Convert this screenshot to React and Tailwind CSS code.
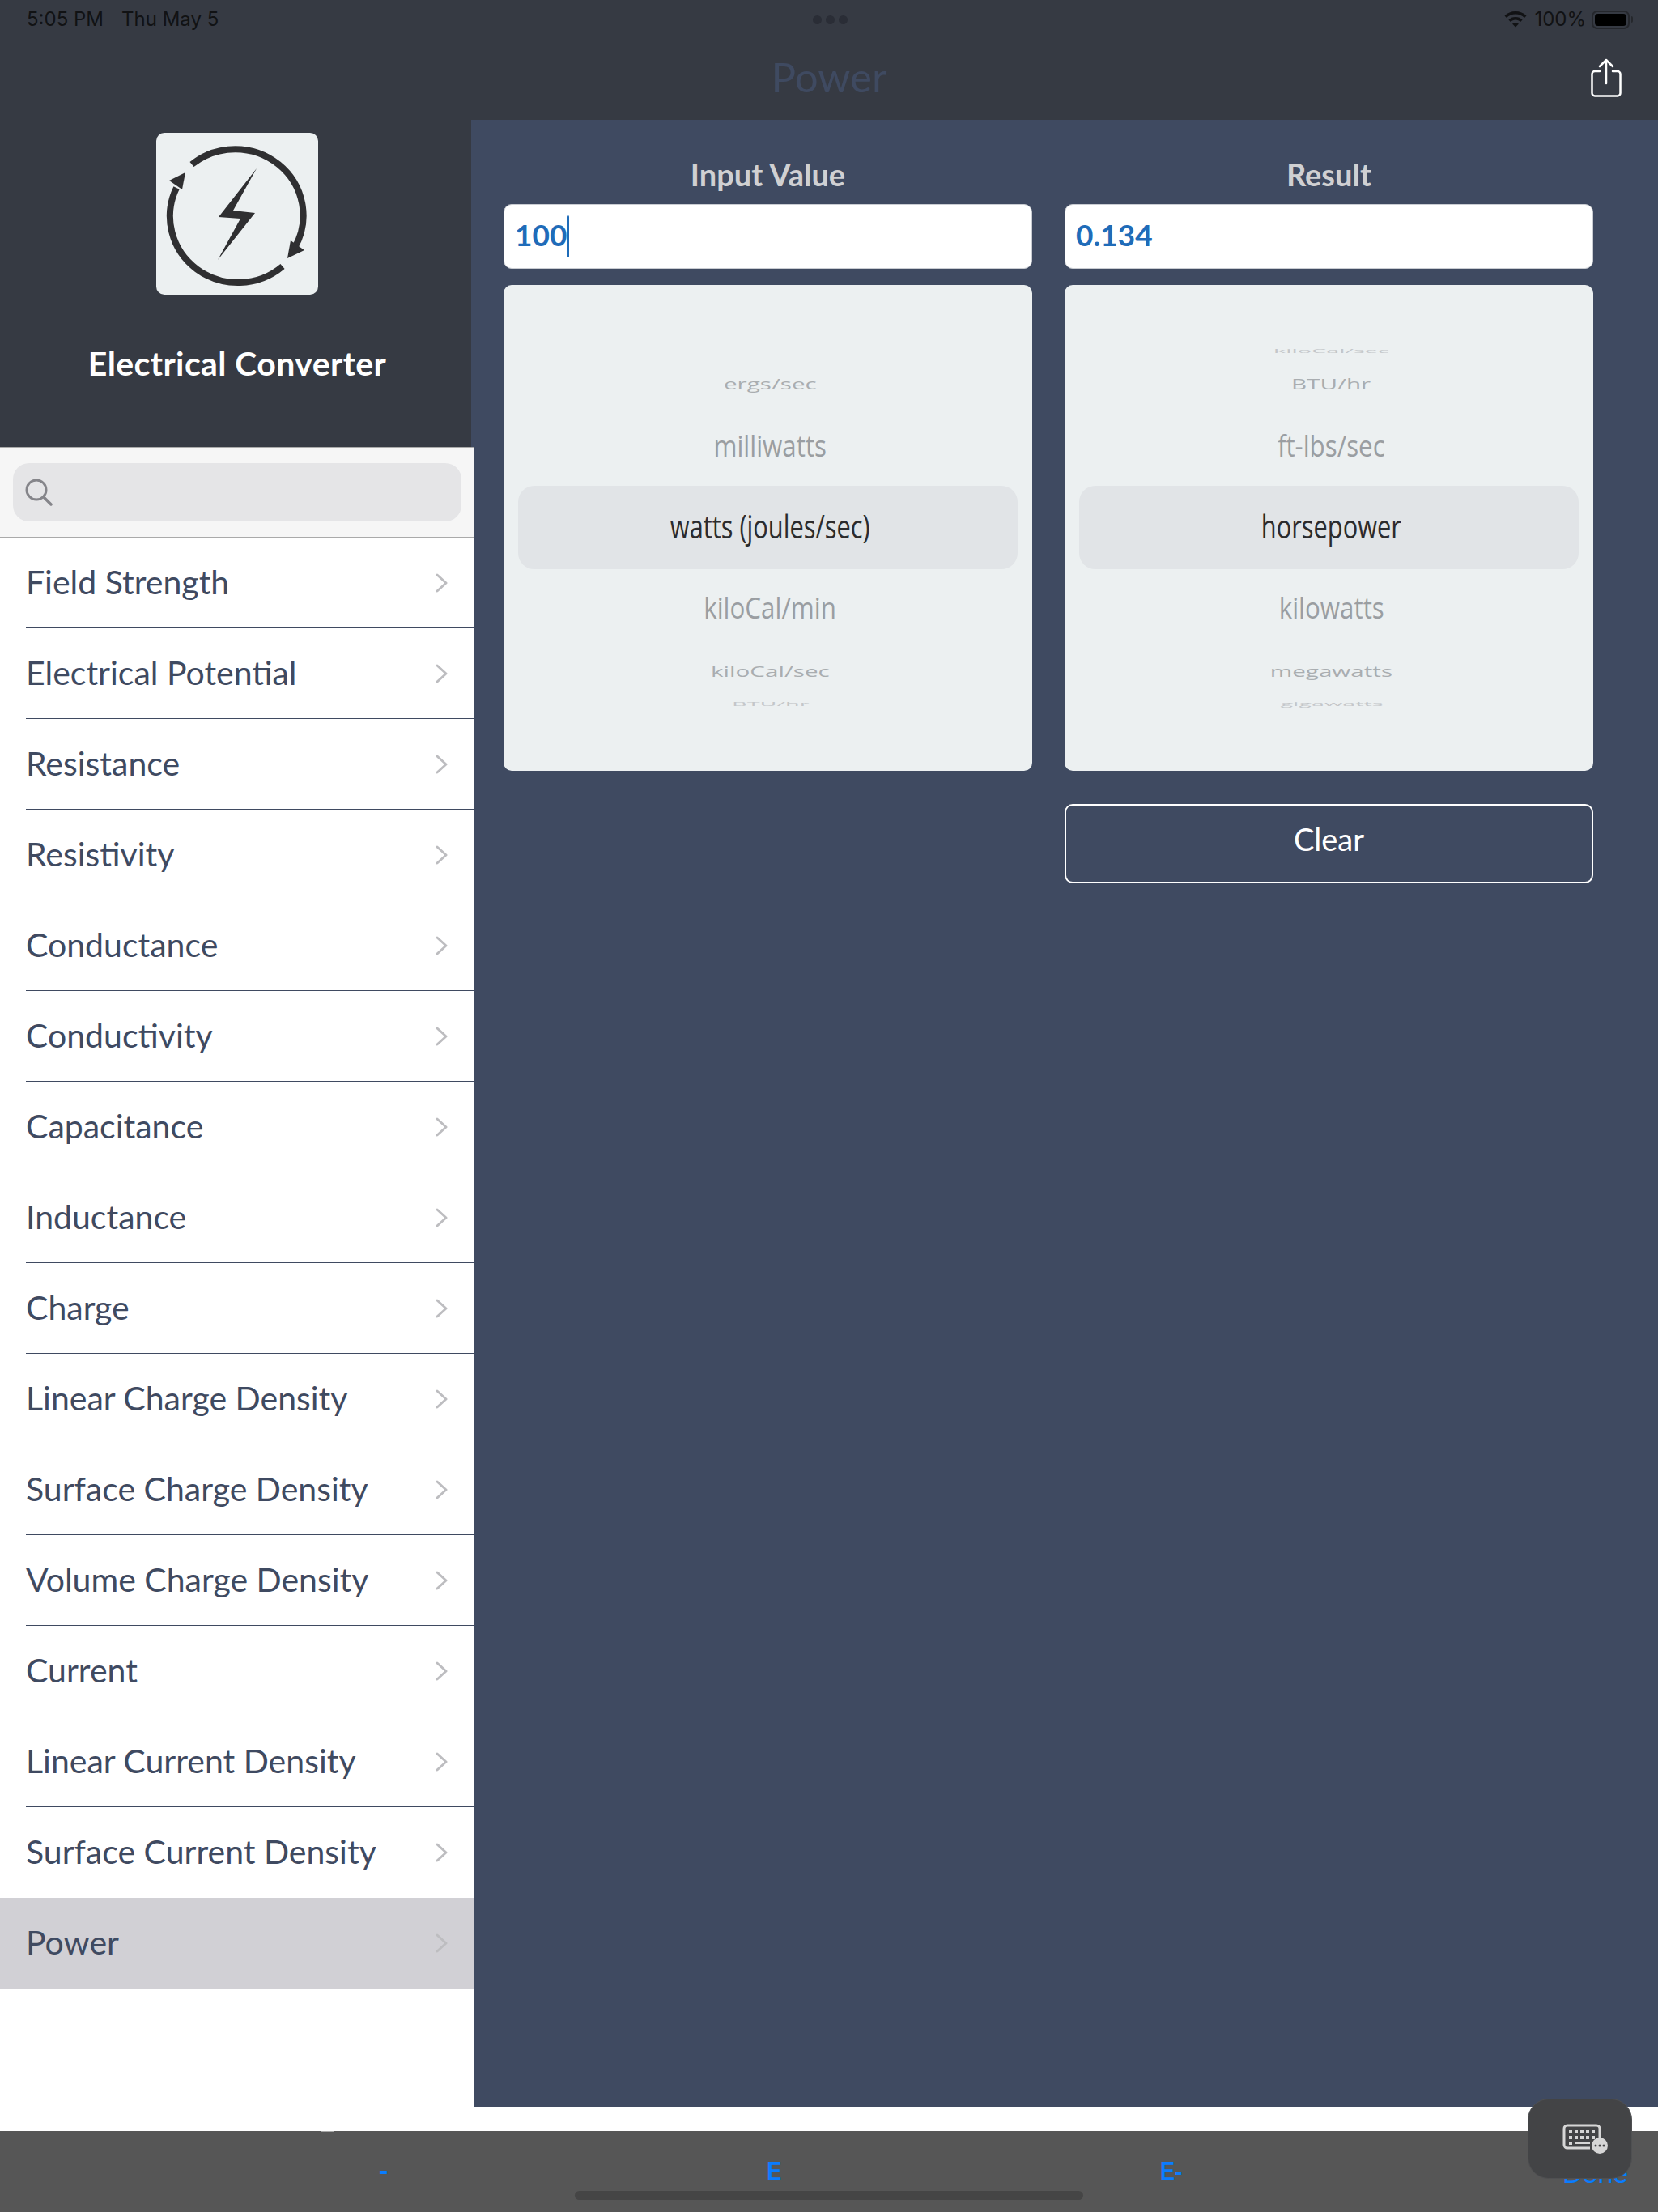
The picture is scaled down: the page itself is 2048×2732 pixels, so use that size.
const items = [
  'Field Strength',
  'Electrical Potential',
  'Resistance',
  'Resistivity',
  'Conductance',
  'Conductivity',
  'Capacitance',
  'Inductance',
  'Charge',
  'Linear Charge Density',
  'Surface Charge Density',
  'Volume Charge Density',
  'Current',
  'Linear Current Density',
  'Surface Current Density',
  'Power',
]

const farText = 'text-[24px] font-medium [transform:scale(1.2,0.3)]'
const nearText = 'text-[26px] font-medium [transform:scale(1.14,0.72)]'
const midText = 'text-[36px] [transform:scale(0.87,1)]'
const mainText = 'text-[40px] [transform:scale(0.77,1.02)]'

const leftWheel = [
  { label: '', cls: 'h-[15px]' },
  { label: 'ergs/sec', cls: 'h-[67px] text-[#a9adb0]', text: nearText },
  { label: 'milliwatts', cls: 'h-[93px] pb-[5px] text-[#9a9ea2]', text: midText },
  { label: 'watts (joules/sec)', selected: true, cls: 'h-[103px] pb-[3px] text-[#2b2b2d]', text: mainText },
  { label: 'kiloCal/min', cls: 'h-[95px] text-[#9a9ea2]', text: midText },
  { label: 'kiloCal/sec', cls: 'h-[62px] text-[#a9adb0]', text: nearText },
  { label: 'BTU/hr', cls: 'h-[17px] text-[#c3c6c9]', text: farText },
]

const rightWheel = [
  { label: 'kiloCal/sec', cls: 'h-[15px] text-[#c3c6c9]', text: farText },
  { label: 'BTU/hr', cls: 'h-[67px] text-[#a9adb0]', text: nearText },
  { label: 'ft-lbs/sec', cls: 'h-[93px] pb-[5px] text-[#9a9ea2]', text: midText },
  { label: 'horsepower', selected: true, cls: 'h-[103px] pb-[3px] text-[#2b2b2d]', text: mainText },
  { label: 'kilowatts', cls: 'h-[95px] text-[#9a9ea2]', text: midText },
  { label: 'megawatts', cls: 'h-[62px] text-[#a9adb0]', text: nearText },
  { label: 'gigawatts', cls: 'h-[17px] text-[#c3c6c9]', text: farText },
]

function Logo() {
  return (
    <div className="w-[200px] h-[200px] rounded-[10px] bg-[#ecf0f1]">
      <svg viewBox="0 0 200 200" className="w-full h-full">
        <path d="M44 39 A84 82 0 0 1 171 142" fill="none" stroke="#2f2f31" strokeWidth="8" />
        <path d="M156 165 A84 82 0 0 1 25 68" fill="none" stroke="#2f2f31" strokeWidth="8" />
        <path d="M162 155 L166 133 L183 145 Z" fill="#2f2f31" />
        <path d="M36 49 L16 59 L32 70 Z" fill="#2f2f31" />
        <path d="M124 44 L77 104 L104 106 L76 157 L122 99 L95 96 Z" fill="#2f2f31" />
      </svg>
    </div>
  )
}

function ShareIcon() {
  return (
    <svg viewBox="0 0 38 48" className="w-[38px] h-[48px]" fill="none" stroke="#fff" strokeWidth="2.5" strokeLinecap="round" strokeLinejoin="round">
      <path d="M11 16 H5 a3.5 3.5 0 0 0 -3.5 3.5 V43 a3.5 3.5 0 0 0 3.5 3.5 H33 a3.5 3.5 0 0 0 3.5 -3.5 V19.5 a3.5 3.5 0 0 0 -3.5 -3.5 H27" />
      <path d="M19 31 V2 M11 10 L19 2 L27 10" />
    </svg>
  )
}

function Chevron() {
  return (
    <svg viewBox="0 0 15 24" className="w-[15px] h-[24px]" fill="none" stroke="#bdbdc0" strokeWidth="3" strokeLinecap="round" strokeLinejoin="round">
      <path d="M2 2 L13 12 L2 22" />
    </svg>
  )
}

function StatusIcons() {
  return (
    <div className="flex items-center justify-end text-[#111214]">
      <svg viewBox="0 0 28 20" className="w-[28px] h-[20px]" fill="#111214">
        <path d="M14 0 C8.6 0 4 2 0.5 5.4 L3 8 C5.9 5.2 9.7 3.6 14 3.6 S22.1 5.2 25 8 L27.5 5.4 C24 2 19.4 0 14 0 Z" />
        <path d="M14 7 C10.6 7 7.7 8.2 5.4 10.4 L7.9 13 C9.5 11.5 11.6 10.6 14 10.6 S18.5 11.5 20.1 13 L22.6 10.4 C20.3 8.2 17.4 7 14 7 Z" />
        <path d="M14 14 C12.4 14 11.1 14.6 10.1 15.5 L14 19.6 L17.9 15.5 C16.9 14.6 15.6 14 14 14 Z" />
      </svg>
      <span className="ml-[9px] text-[24px] leading-none">100%</span>
      <div className="ml-[7px] flex items-center gap-[2px]">
        <div className="w-[47px] h-[23px] rounded-[7px] border-2 border-[#25272c] p-[2px]">
          <div className="w-full h-full rounded-[4px] bg-black" />
        </div>
        <div className="w-[2px] h-[8px] rounded-r bg-[#25272c]" />
      </div>
    </div>
  )
}

function Wheel({ rows }) {
  return (
    <div className="h-[600px] rounded-[10px] bg-[#ecf0f1] px-[18px] pt-[73px] overflow-hidden font-['Open_Sans',sans-serif]">
      {rows.map((row, i) => (
        <div
          key={i}
          className={`flex items-center justify-center overflow-hidden whitespace-nowrap pl-[6px] ${row.cls} ${row.selected ? 'rounded-[20px] bg-[#e1e4e7]' : ''}`}
        >
          <span className={`block leading-none ${row.text || ''}`}>{row.label}</span>
        </div>
      ))}
    </div>
  )
}

function Column({ title, value, caret, rows, children }) {
  return (
    <div className="w-[653px]">
      <div className="h-[70px] pb-[4px] flex items-center justify-center text-[38px] font-bold text-[#d0d0d2]">{title}</div>
      <div className="h-[80px] rounded-[10px] bg-white border border-[#c9ccd2] flex items-center pl-[13px]">
        <span className="text-[37px] font-bold text-[#1f6cb9] leading-none pb-[5px]">{value}</span>
        {caret && <span className="w-[3px] h-[52px] bg-[#1f6cb9] rounded-sm" />}
      </div>
      <div className="mt-[20px]">
        <Wheel rows={rows} />
      </div>
      {children}
    </div>
  )
}

export default function App() {
  return (
    <div className="relative w-[2048px] h-[2732px] bg-white overflow-hidden font-['Lato',sans-serif] flex flex-col">
      {/* status + nav */}
      <div className="h-[148px] bg-[#363a43] flex flex-col shrink-0">
        <div className="h-[48px] grid grid-cols-[1fr_auto_1fr] items-center pl-[33px] pr-[31px] font-['Inter',sans-serif]">
          <div className="text-[24px] leading-none text-[#111214] flex gap-[22px]">
            <span>5:05 PM</span>
            <span>Thu May 5</span>
          </div>
          <div className="flex gap-[5px]">
            <span className="w-[11px] h-[11px] rounded-full bg-[#2a2d36]" />
            <span className="w-[11px] h-[11px] rounded-full bg-[#2a2d36]" />
            <span className="w-[11px] h-[11px] rounded-full bg-[#2a2d36]" />
          </div>
          <StatusIcons />
        </div>
        <div className="flex-1 relative flex items-center justify-center">
          <span className="text-[51px] leading-none text-[#3f4a61] -mt-[7px]">Power</span>
          <div className="absolute left-[1965px] top-[24px] flex">
            <ShareIcon />
          </div>
        </div>
      </div>

      <div className="flex flex-1 min-h-0">
        {/* sidebar */}
        <div className="w-[582px] shrink-0 flex flex-col">
          <div className="h-[404px] bg-[#363a43] flex flex-col items-center pt-[16px] pl-[4px]">
            <Logo />
            <div className="mt-[56px] text-[41px] tracking-[0.4px] leading-[58px] font-bold text-white">Electrical Converter</div>
          </div>
          <div className="w-[586px] flex-1 relative z-10 bg-white">
            <div className="h-[112px] bg-[#f6f6f6] border-t border-b border-[#aaaaaa] px-[16px] flex items-center">
              <div className="w-full h-[72px] rounded-[20px] bg-[#e5e5e7] flex items-center pl-[15px]">
                <svg viewBox="0 0 34 34" className="w-[34px] h-[34px]" fill="none" stroke="#85858a" strokeWidth="3">
                  <circle cx="14" cy="14" r="12" />
                  <path d="M23 23 L32 32" strokeLinecap="round" strokeWidth="3.5" />
                </svg>
              </div>
            </div>
            {items.map((item, i) => {
              const active = item === 'Power'
              return (
                <div key={item} className={`h-[112px] pl-[32px] ${active ? 'bg-[#d1d0d5]' : ''}`}>
                  <div className={`h-full flex items-center pr-[33px] ${i < 14 ? 'border-b border-[#3f4a61]' : ''}`}>
                    <span className="flex-1 text-[41px] leading-none text-[#3f4a61] pb-[3px]">{item}</span>
                    <Chevron />
                  </div>
                </div>
              )
            })}
          </div>
        </div>

        {/* main panel */}
        <div className="flex-1 h-[2454px] bg-[#3f4a61] pl-[40px] pt-[34px] flex gap-[40px]">
          <Column title="Input Value" value="100" caret rows={leftWheel} />
          <Column title="Result" value="0.134" rows={rightWheel}>
            <button className="mt-[41px] w-full h-[98px] rounded-[10px] border-2 border-white text-[38px] text-white flex items-center justify-center pb-[12px]">
              Clear
            </button>
          </Column>
        </div>
      </div>

      {/* keyboard shortcut bar */}
      <div className="h-[100px] bg-[#565656] shrink-0 relative font-['Liberation_Sans',sans-serif] text-[#0a7cff] text-[34px] leading-none">
        <span className="absolute left-[396px] top-[-1px] w-[16px] h-[2px] bg-[#a8a8a8]" />
        <span className="absolute left-[468px] top-[31px] font-bold">-</span>
        <span className="absolute left-[945px] top-[32px] font-bold [transform:scaleX(0.8)]">E</span>
        <span className="absolute left-[1433px] top-[32px] font-bold [transform:scaleX(0.8)] origin-left">E-</span>
        <span className="absolute left-[1930px] top-[35px]">Done</span>
        <div className="absolute left-[710px] top-[74px] w-[628px] h-[11px] rounded-full bg-[#454545]" />
      </div>

      {/* floating keyboard button */}
      <div className="absolute left-[1887px] top-[2592px] w-[129px] h-[99px] rounded-[26px] bg-[#434446] border border-[#4f5052] flex items-center justify-center">
        <svg viewBox="0 0 58 38" className="w-[58px] h-[38px] ml-[14px]">
          <path d="M46 22 V6 a4 4 0 0 0 -4 -4 H6 a4 4 0 0 0 -4 4 V26 a4 4 0 0 0 4 4 H34" fill="none" stroke="#d6d6d6" strokeWidth="3" />
          {[8, 15, 22, 29, 36].map(x => (
            <rect key={x} x={x} y="8" width="4" height="4" fill="#d6d6d6" />
          ))}
          {[8, 15, 22, 29, 36].map(x => (
            <rect key={x} x={x} y="15" width="4" height="4" fill="#d6d6d6" />
          ))}
          <rect x="8" y="22" width="4" height="4" fill="#d6d6d6" />
          <rect x="15" y="22" width="19" height="3" fill="#d6d6d6" />
          <circle cx="46" cy="27" r="10" fill="#d6d6d6" />
          <circle cx="41" cy="27" r="1.5" fill="#434446" />
          <circle cx="46" cy="27" r="1.5" fill="#434446" />
          <circle cx="51" cy="27" r="1.5" fill="#434446" />
        </svg>
      </div>
    </div>
  )
}
